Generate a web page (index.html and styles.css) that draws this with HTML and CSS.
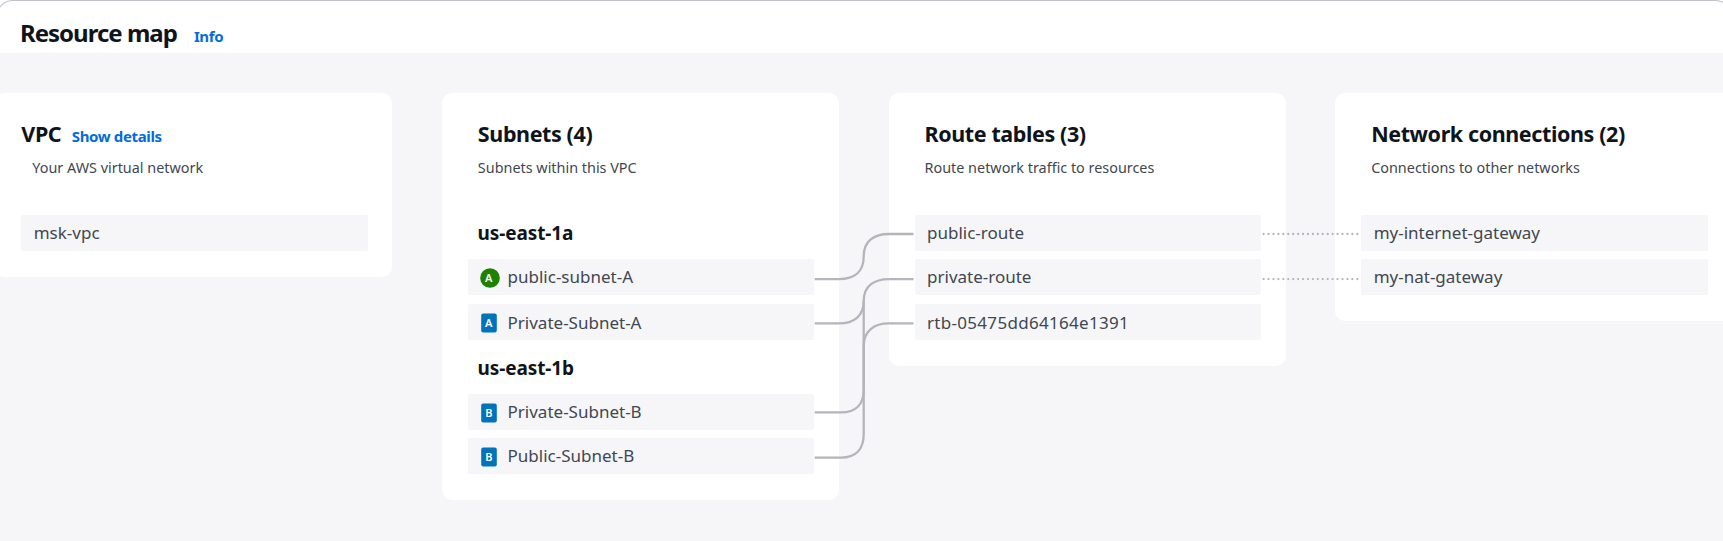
FILE: index.html
```
<!DOCTYPE html>
<html lang="en">
<head>
<meta charset="utf-8">
<title>Resource map</title>
<link rel="stylesheet" href="styles.css">
</head>
<body>
<section class="panel">
  <header class="panel-header">
    <h1>Resource map</h1>
    <a class="link">Info</a>
  </header>
  <main class="map">
    <article class="card card-vpc">
      <div class="card-head">
        <div class="title"><h2>VPC</h2><a class="link">Show details</a></div>
        <p class="desc indented">Your AWS virtual network</p>
      </div>
      <ul class="rows">
        <li class="row">msk-vpc</li>
      </ul>
    </article>
    <article class="card">
      <div class="card-head">
        <div class="title"><h2>Subnets (4)</h2></div>
        <p class="desc">Subnets within this VPC</p>
      </div>
      <ul class="rows">
        <li class="zone">us-east-1a</li>
        <li class="row"><svg class="badge" viewBox="0 0 20 20"><circle cx="10" cy="10" r="9.8" fill="#1d8102"/><text x="8.8" y="14">A</text></svg>public-subnet-A</li>
        <li class="row"><svg class="badge" viewBox="0 0 20 20"><rect x="1.2" y=".4" width="15.6" height="19.2" rx="2" fill="#0073bb"/><text x="8.8" y="14">A</text></svg>Private-Subnet-A</li>
        <li class="zone">us-east-1b</li>
        <li class="row"><svg class="badge" viewBox="0 0 20 20"><rect x="1.2" y=".4" width="15.6" height="19.2" rx="2" fill="#0073bb"/><text x="8.8" y="14">B</text></svg>Private-Subnet-B</li>
        <li class="row"><svg class="badge" viewBox="0 0 20 20"><rect x="1.2" y=".4" width="15.6" height="19.2" rx="2" fill="#0073bb"/><text x="8.8" y="14">B</text></svg>Public-Subnet-B</li>
      </ul>
    </article>
    <article class="card">
      <div class="card-head">
        <div class="title"><h2>Route tables (3)</h2></div>
        <p class="desc">Route network traffic to resources</p>
      </div>
      <ul class="rows">
        <li class="row">public-route</li>
        <li class="row">private-route</li>
        <li class="row row-id">rtb-05475dd64164e1391</li>
      </ul>
    </article>
    <article class="card">
      <div class="card-head">
        <div class="title"><h2>Network connections (2)</h2></div>
        <p class="desc">Connections to other networks</p>
      </div>
      <ul class="rows">
        <li class="row">my-internet-gateway</li>
        <li class="row">my-nat-gateway</li>
      </ul>
    </article>
    <svg class="links" viewBox="0 53 1723 488">
      <g class="solid">
        <path d="M814.7 279.1H839C854 279.1 863.7 272 863.7 256.5S874 234 889 234H913.5"/>
        <path d="M814.7 323.4H839C854 323.4 863.7 316 863.7 301S874 279.1 889 279.1H913.5"/>
        <path d="M814.7 412.4H841C856 412.4 863.7 404 863.7 390V301"/>
        <path d="M814.7 457.6H841C856 457.6 863.7 449 863.7 434V346C863.7 331 874 323.4 889 323.4H913.5"/>
      </g>
      <g class="dotted">
        <path d="M1263.6 234H1358.5"/>
        <path d="M1263.6 279.1H1358.5"/>
      </g>
    </svg>
  </main>
</section>
</body>
</html>
```
FILE: styles.css
```
* { box-sizing: border-box; }
body {
  margin: 0;
  overflow: hidden;
  background: #fff;
  color: #414750;
  font-family: "Noto Sans", sans-serif;
}
h1, h2, p, ul { margin: 0; padding: 0; }
h1, h2, .link, .zone { font-weight: 700; }

.panel {
  display: flex;
  flex-direction: column;
  height: 541px;
  margin: 0 -9px 0 -4px;
}
.panel-header {
  display: flex;
  align-items: baseline;
  gap: 17px;
  height: 53px;
  padding: 15px 0 0 23px;
  border: 1px solid #c2c2ca;
  border-bottom: 0;
  border-radius: 17px 17px 0 0;
}
h1 {
  color: #0f141a;
  font-size: 24px;
  line-height: 34px;
  letter-spacing: -1px;
}
.link {
  color: #006ce0;
  font-size: 15px;
  letter-spacing: -0.35px;
}

.map {
  position: relative;
  flex: 1;
  display: flex;
  align-items: flex-start;
  gap: 49.67px;
  padding: 40px 0 0;
  background: #f6f6f9;
}
.card {
  flex: 0 0 397px;
  padding: 27px 24.6px 25.6px 26px;
  background: #fff;
  border-radius: 10px;
}
.card:first-child { margin-left: -0.7px; }
.card-head {
  height: 95px;
  padding-left: 9.9px;
}
.card-vpc .card-head { padding-left: 0; }
.title {
  display: flex;
  align-items: baseline;
  gap: 10.5px;
  height: 28px;
  margin-bottom: 10.2px;
}
h2 {
  color: #0f141a;
  font-size: 21.5px;
  line-height: 28px;
  letter-spacing: -0.4px;
}
.desc {
  font-size: 14.4px;
  line-height: 20px;
}
.indented { padding-left: 11px; }

.rows {
  display: flex;
  flex-direction: column;
  gap: 8px;
  list-style: none;
}
.rows > :nth-child(n+3):nth-child(-n+5) { margin-top: 1px; }
.row, .zone {
  display: flex;
  height: 36px;
}
.row {
  padding-left: 12.4px;
  background: #f6f6f9;
  border-radius: 2px;
  font-size: 17px;
  line-height: 35px;
}
.row:nth-child(3) { line-height: 37px; }
.row-id { letter-spacing: 0.3px; }
.zone {
  padding-left: 9.6px;
  color: #0f141a;
  font-size: 19px;
  line-height: 36px;
  letter-spacing: -0.1px;
}
.zone:nth-child(4) { line-height: 38px; }
.badge {
  flex: none;
  width: 20px;
  height: 20px;
  margin: 8.6px 7.2px 0 0;
}
.badge text {
  fill: #fff;
  font-size: 11px;
  font-weight: 600;
  text-anchor: middle;
}

/* connectors are drawn across the cards and the gaps between them */
.links {
  position: absolute;
  top: 0;
  left: 4px;
  width: 1723px;
  height: 488px;
  fill: none;
  stroke: #b4b4bb;
  stroke-width: 2.3;
}
.dotted {
  stroke-linecap: round;
  stroke-dasharray: 0 4.93;
}
```
